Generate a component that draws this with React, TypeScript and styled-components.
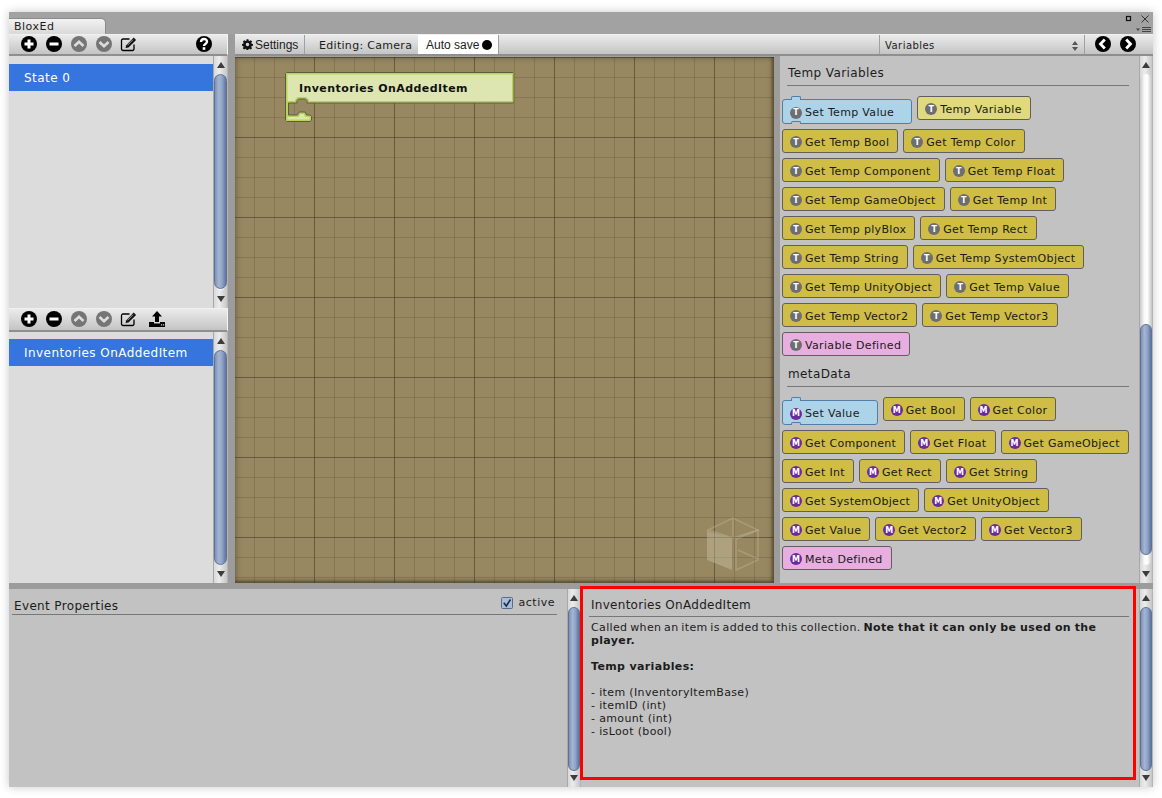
import React from "react";
import styled, { createGlobalStyle } from "styled-components";

const Global = createGlobalStyle`
  html, body { margin: 0; padding: 0; background: #fff; }
  #root { width: 1162px; height: 798px; overflow: hidden; }
`;

const Page = styled.div`
  width: 1162px; height: 798px; box-sizing: border-box; padding: 12px 9px 11px 9px;
  background: #fff; font-family: "DejaVu Sans", sans-serif; font-size: 11px; color: #1c1c1c;
`;
const Window = styled.div`
  position: relative; width: 1144px; height: 775px; display: flex; flex-direction: column;
  background: #a2a2a2; box-shadow: 0 0 9px rgba(0,0,0,.22);
`;
const TitleStrip = styled.div`
  height: 22px; flex: none; display: flex; align-items: flex-end; justify-content: space-between;
  background: #a2a2a2;
`;
const Tab = styled.div`
  width: 97px; height: 16px; box-sizing: border-box; padding-left: 5px; line-height: 16px; letter-spacing: .5px;
  background: linear-gradient(#f2f2f2, #d9d9d9); border-radius: 0 5px 0 0; border-right: 1px solid #8c8c8c; border-top: 1px solid #8c8c8c;
`;
const WinControls = styled.svg`
  width: 40px; height: 22px; flex: none; display: block;
`;
const Top = styled.div`
  height: 549px; flex: none; display: flex;
`;
const LeftCol = styled.div`
  width: 219px; flex: none; display: flex; flex-direction: column;
`;
const VSplit = styled.div<{ $w: number }>`
  width: ${p => p.$w}px; flex: none; background: #9c9c9c;
`;
const Toolbar = styled.div<{ $h: number }>`
  height: ${p => p.$h}px; box-sizing: border-box; flex: none; display: flex; align-items: center;
  padding: 0 0 1px 11px; gap: 7px;
  background: linear-gradient(#ebebeb, #c4c4c4); border-bottom: 2px solid #8f8f8f; border-top: 1px solid #f0f0f0;
  border-right: 1px solid #f4f4f4;
`;
const HelpSlot = styled.div`
  margin-left: 50px; display: flex;
`;
const UploadSlot = styled.div`
  margin-left: 3px; display: flex;
`;
const ListPanel = styled.div<{ $h: number }>`
  height: ${p => p.$h}px; flex: none; display: flex; background: #dcdcdc;
`;
const ListBody = styled.div<{ $top: number }>`
  flex: 1; padding-top: ${p => p.$top}px; min-width: 0;
`;
const ListRow = styled.div`
  height: 27px; line-height: 28px; background: #3575dd; color: #fff; padding-left: 15px; font-size: 12px; letter-spacing: .44px;
`;
const ScrollBar = styled.div<{ $w?: number }>`
  width: ${p => p.$w ?? 15}px; flex: none; box-sizing: border-box; display: flex; flex-direction: column; align-items: stretch;
  background: linear-gradient(90deg, #d8d8d8, #ececec 40%, #c6c6c6);
  border-left: 1px solid #a8a8a8; border-right: 1px solid #b4b4b4;
`;
const Arrow = styled.div<{ $down?: boolean }>`
  height: 18px; flex: none; display: flex; align-items: center; justify-content: center;
  &::before {
    content: ""; width: 0; height: 0; border-left: 4px solid transparent; border-right: 4px solid transparent;
    ${p => p.$down ? "border-top: 6px solid #3c3c3c;" : "border-bottom: 6px solid #3c3c3c;"}
  }
`;
const Track = styled.div`
  flex: 1; min-height: 0; display: flex; flex-direction: column;
  background: linear-gradient(90deg, #c9c9c9, #f8f8f8 35%, #ffffff 60%, #c4c4c4); border-radius: 8px;
`;
const Thumb = styled.div<{ $top: number; $h: number }>`
  margin-top: ${p => p.$top}px; height: ${p => p.$h}px; box-sizing: border-box; flex: none;
  background: linear-gradient(90deg, #7f92b4, #a3b5d2 35%, #8fa3c6 65%, #5f739c);
  border: 1px solid #5d7099; border-radius: 8px;
`;
const Work = styled.div`
  flex: 1; min-width: 0; display: flex; flex-direction: column;
`;
const TopBar = styled.div`
  height: 22px; box-sizing: border-box; flex: none; display: flex; align-items: stretch;
  background: linear-gradient(#ebebeb, #c4c4c4); border-bottom: 2px solid #8f8f8f; border-top: 1px solid #f0f0f0;
`;
const SettingsBtn = styled.div`
  width: 70px; box-sizing: border-box; display: flex; align-items: center; gap: 2px; padding-left: 7px;
  border-right: 1px solid #a0a0a0; font-family: "Liberation Sans", sans-serif; font-size: 12px;
`;
const EditingLabel = styled.div`
  width: 113px; box-sizing: border-box; padding-left: 14px; line-height: 21px; letter-spacing: .3px;
`;
const AutoSave = styled.div`
  width: 81px; box-sizing: border-box; display: flex; align-items: center; gap: 3px; padding-left: 8px;
  background: #fff; border-right: 1px solid #a0a0a0; font-family: "Liberation Sans", sans-serif; font-size: 12px;
  &::after { content: ""; width: 10px; height: 10px; border-radius: 50%; background: #000; }
`;
const Gap = styled.div` flex: 1; `;
const Dropdown = styled.div`
  width: 206px; box-sizing: border-box; display: flex; align-items: center; justify-content: space-between;
  padding: 2px 5px 0 5px; border-left: 1px solid #a0a0a0; border-right: 1px solid #a0a0a0; font-size: 10px; letter-spacing: .45px;
`;
const NavBtns = styled.div`
  width: 68px; flex: none; display: flex; gap: 7px; align-items: center; padding: 0 0 1px 9px; box-sizing: border-box;
`;
const WorkBody = styled.div`
  flex: 1; min-height: 0; display: flex;
`;
const Canvas = styled.div`
  position: relative; width: 539px; flex: none; overflow: hidden; margin-top: 1px;
  background-color: #978862;
  background-image:
    linear-gradient(90deg, rgba(60,50,30,.42) 1px, transparent 1px),
    linear-gradient(rgba(60,50,30,.42) 1px, transparent 1px),
    linear-gradient(90deg, rgba(80,68,40,.24) 1px, transparent 1px),
    linear-gradient(rgba(80,68,40,.24) 1px, transparent 1px);
  background-size: 80px 80px, 80px 80px, 20px 20px, 20px 20px;
  background-position: 79px 0, 0 0, 19px 0, 0 0;
  box-shadow: inset 0 0 6px rgba(40,30,10,.5), inset -2px -2px 3px rgba(40,30,10,.4);
`;
const EventBlock = styled.div`
  position: absolute; left: 50px; top: 15px; width: 229px; height: 50px;
`;
const EventShape = styled.svg`
  position: absolute; left: 0; top: 0; width: 229px; height: 50px; display: block;
`;
const EventTitle = styled.div`
  position: absolute; left: 14px; top: 10px; font-weight: 700; font-size: 11px; letter-spacing: .42px; color: #111; white-space: nowrap;
`;
const Cube = styled.svg`
  position: absolute; left: 471px; top: 459px; width: 55px; height: 57px;
`;
const Palette = styled.div`
  width: 359px; flex: none; box-sizing: border-box; background: #c2c2c2; padding: 9px 10px 0 2px; min-height: 0;
`;
const Heading = styled.div`
  margin: 0 0 10px 5px; padding: 0 0 4px 1px; height: 16px; line-height: 16px; box-sizing: content-box;
  border-bottom: 1px solid #777; font-size: 12px; letter-spacing: .4px;
`;
const Rows = styled.div`
  display: flex; flex-direction: column; gap: 5px; margin-bottom: 10px;
`;
const Row = styled.div`
  display: flex; gap: 5px; align-items: flex-start;
`;
const BLOCK = {
  get: ["#cfbd45", "#5f5f5f"],
  temp: ["#e0d97e", "#5f5f5f"],
  set: ["#add3e8", "#4f7fa6"],
  pink: ["#e8aee0", "#5f5f5f"],
} as const;
const Block = styled.div<{ $k: keyof typeof BLOCK }>`
  position: relative; height: ${p => p.$k === "set" ? 25 : 24}px; margin-top: ${p => p.$k === "set" ? 3 : 0}px;
  box-sizing: border-box; display: flex; align-items: center; gap: 3px;
  padding: 2px ${p => p.$k === "set" ? 17 : 8}px 0 7px; white-space: nowrap;
  background: ${p => BLOCK[p.$k][0]}; border: 1px solid ${p => BLOCK[p.$k][1]}; border-radius: 3px;
  letter-spacing: .33px; color: #1a1a1a;
  ${p => p.$k === "set" ? `
    &::before, &::after {
      content: ""; position: absolute; left: 8px; width: 8px; height: 3px; background: ${BLOCK.set[0]};
      border: 1px solid ${BLOCK.set[1]};
    }
    &::before { top: -4px; border-bottom: 0; border-radius: 2px 2px 0 0; }
    &::after { bottom: -1px; height: 2px; background: #c2c2c2; border-bottom: 0; border-radius: 2px 2px 0 0; }
  ` : ""}
`;
const Badge = styled.span<{ $m?: boolean }>`
  width: 12px; height: 12px; flex: none; border-radius: 50%; display: flex; align-items: center; justify-content: center;
  background: ${p => p.$m ? "#6b2a9e" : "#6e6e72"}; color: #fff; font-size: 8px; font-weight: 700; letter-spacing: 0;
`;
const HSplit = styled.div`
  height: 6px; flex: none; background: #9c9c9c;
`;
const Bottom = styled.div`
  flex: 1; min-height: 0; display: flex;
`;
const Pane = styled.div`
  width: 572px; flex: none; display: flex; background: #c2c2c2;
`;
const PaneBody = styled.div<{ $pl: number; $pr: number }>`
  flex: 1; min-width: 0; box-sizing: border-box; padding: 0 ${p => p.$pr}px 0 ${p => p.$pl}px;
`;
const PropHead = styled.div`
  display: flex; align-items: flex-end; justify-content: space-between; height: 26px; box-sizing: border-box;
  padding: 0 2px 0 2px; border-bottom: 1px solid #777;
`;
const PropTitle = styled.div`
  font-size: 12px; letter-spacing: .35px; line-height: 16px;
`;
const Active = styled.div`
  display: flex; align-items: center; gap: 6px; letter-spacing: .5px; padding-bottom: 5px;
`;
const Check = styled.svg`
  width: 12px; height: 12px; display: block;
`;
const DocTitle = styled.div`
  height: 28px; box-sizing: border-box; margin-left: -2px; padding: 8px 0 0 2px; line-height: 16px; font-size: 12px; letter-spacing: .28px;
  border-bottom: 1px solid #777;
`;
const Doc = styled.div`
  padding-top: 4px; line-height: 13px; letter-spacing: .36px;
`;
const DocLine = styled.div<{ $gap?: number }>`
  margin-top: ${p => p.$gap ?? 0}px; white-space: nowrap;
`;
const Lead = styled.span`
  word-spacing: -1.1px;
`;
const LeadStrong = styled.b`
  word-spacing: -.5px;
`;
const RedFrame = styled.div`
  position: absolute; left: 571px; top: 574px; width: 556px; height: 194px; box-sizing: border-box;
  border: 3px solid #f00; pointer-events: none;
`;
const Ico = styled.svg`
  width: 18px; height: 18px; display: block; flex: none;
`;
const SmallIco = styled.svg`
  width: 11px; height: 11px; display: block; flex: none;
`;
const UpDown = styled.svg`
  width: 8px; height: 12px; display: block; flex: none;
`;

type Kind = "plus" | "minus" | "up" | "down" | "help" | "left" | "right";
function Round({ kind }: { kind: Kind }) {
  const grey = kind === "up" || kind === "down";
  return (
    <Ico viewBox="0 0 18 18">
      <circle cx="9" cy="9" r="8" fill={grey ? "#757575" : "#000"} />
      {kind === "plus" && <path d="M9 4.5v9M4.5 9h9" stroke="#fff" strokeWidth="3" />}
      {kind === "minus" && <path d="M4.5 9h9" stroke="#fff" strokeWidth="3" />}
      {kind === "up" && <path d="M4.5 11 9 6.7l4.5 4.3" fill="none" stroke="#ddd" strokeWidth="2.6" />}
      {kind === "down" && <path d="M4.5 7 9 11.3 13.5 7" fill="none" stroke="#ddd" strokeWidth="2.6" />}
      {kind === "left" && <path d="M10.8 4.5 6.5 9l4.3 4.5" fill="none" stroke="#fff" strokeWidth="2.8" />}
      {kind === "right" && <path d="M7.2 4.5 11.500 9l-4.300 4.500" fill="none" stroke="#fff" strokeWidth="2.8" />}
      {kind === "help" && (
        <>
          <path d="M6 7c0-4 6-4 6-.4 0 2.400-3 2.200-3 4.400" fill="none" stroke="#fff" strokeWidth="2.400" />
          <rect x="7.700" y="12.200" width="2.600" height="2.600" fill="#fff" />
        </>
      )}
    </Ico>
  );
}
function EditIcon() {
  return (
    <Ico viewBox="0 0 18 18">
      <path d="M14 9.500V14a1.500 1.500 0 0 1-1.500 1.500H3A1.500 1.500 0 0 1 1.500 14V5.500A1.500 1.500 0 0 1 3 4h6.500" fill="none" stroke="#000" strokeWidth="1.300" />
      <path d="M6.300 10.200 13.700 2.500l2.400 2.400-7.600 7.500-3 .6z" fill="#111" />
      <path d="M7.500 10.300 13 4.700" stroke="#ddd" strokeWidth=".7" />
    </Ico>
  );
}
function UploadIcon() {
  return (
    <Ico viewBox="0 0 18 18">
      <path d="M9 1 14 6.500H11V12H7V6.500H4z" fill="#000" />
      <path d="M1 12h5v1.500h6V12h5v5H1z" fill="#000" />
      <rect x="13" y="14.300" width="1.200" height="1.200" fill="#ddd" />
      <rect x="15" y="14.300" width="1.200" height="1.200" fill="#ddd" />
    </Ico>
  );
}
function Gear() {
  return (
    <SmallIco viewBox="0 0 24 24">
      <path fill="#111" fillRule="evenodd" d="M10 1h4l.6 3.200 2 .8 2.700-1.800 2.800 2.800L20.200 8.700l.8 2 3 .6v4l-3 .6-.8 2 1.700 2.700-2.800 2.800-2.700-1.800-2 .8-.6 2.600h-4l-.6-2.600-2-.8-2.700 1.800-2.800-2.800 1.700-2.700-.8-2-3-.6v-4l3-.6.8-2L2.100 6l2.800-2.800L7.600 5l2-.8zM12 8.500a3.800 3.800 0 1 0 0 7.600 3.800 3.800 0 0 0 0-7.600z" transform="translate(0 -.5)" />
    </SmallIco>
  );
}

const tempRows: [string, keyof typeof BLOCK][][] = [
  [["Set Temp Value", "set"], ["Temp Variable", "temp"]],
  [["Get Temp Bool", "get"], ["Get Temp Color", "get"]],
  [["Get Temp Component", "get"], ["Get Temp Float", "get"]],
  [["Get Temp GameObject", "get"], ["Get Temp Int", "get"]],
  [["Get Temp plyBlox", "get"], ["Get Temp Rect", "get"]],
  [["Get Temp String", "get"], ["Get Temp SystemObject", "get"]],
  [["Get Temp UnityObject", "get"], ["Get Temp Value", "get"]],
  [["Get Temp Vector2", "get"], ["Get Temp Vector3", "get"]],
  [["Variable Defined", "pink"]],
];
const metaRows: [string, keyof typeof BLOCK][][] = [
  [["Set Value", "set"], ["Get Bool", "get"], ["Get Color", "get"]],
  [["Get Component", "get"], ["Get Float", "get"], ["Get GameObject", "get"]],
  [["Get Int", "get"], ["Get Rect", "get"], ["Get String", "get"]],
  [["Get SystemObject", "get"], ["Get UnityObject", "get"]],
  [["Get Value", "get"], ["Get Vector2", "get"], ["Get Vector3", "get"]],
  [["Meta Defined", "pink"]],
];

function BlockRows({ rows, meta }: { rows: [string, keyof typeof BLOCK][][]; meta?: boolean }) {
  return (
    <Rows>
      {rows.map((r, i) => (
        <Row key={i}>
          {r.map(([label, k]) => (
            <Block key={label} $k={k}>
              <Badge $m={meta}>{meta ? "M" : "T"}</Badge>
              {label}
            </Block>
          ))}
        </Row>
      ))}
    </Rows>
  );
}

function Scroll({ top, h, w }: { top: number; h: number; w?: number }) {
  return (
    <ScrollBar $w={w}>
      <Arrow />
      <Track><Thumb $top={top} $h={h} /></Track>
      <Arrow $down />
    </ScrollBar>
  );
}

const EVENT_PATH = "M.5 1.500 1.500.5H228l1 1V30l-1 1H22V28.500L20.500 27H13.500L12 28.500V31H3.500V43H12.500L14 40H20L21.500 43H25L26.500 44.500V48L25.500 49.500H1.500L.5 48.500Z";

export default function App() {
  return (
    <Page>
      <Global />
      <Window>
        <TitleStrip>
          <Tab>BloxEd</Tab>
          <WinControls viewBox="0 0 40 22">
            <rect x="13.500" y="4.500" width="4" height="4" fill="none" stroke="#111" strokeWidth="1.200" />
            <path d="M28.500 3.500l7 7M35.500 3.500l-7 7" stroke="#333" strokeWidth="1" />
            <path d="M23 16.500h4l-2 2.500z" fill="#444" />
            <path d="M29 15.500h9M29 17.500h9M29 19.500h9" stroke="#444" strokeWidth="1" />
          </WinControls>
        </TitleStrip>
        <Top>
          <LeftCol>
            <Toolbar $h={22}>
              <Round kind="plus" /><Round kind="minus" /><Round kind="up" /><Round kind="down" /><EditIcon />
              <HelpSlot><Round kind="help" /></HelpSlot>
            </Toolbar>
            <ListPanel $h={252}>
              <ListBody $top={8}>
                <ListRow>State 0</ListRow>
              </ListBody>
              <Scroll top={0} h={215} />
            </ListPanel>
            <Toolbar $h={24}>
              <Round kind="plus" /><Round kind="minus" /><Round kind="up" /><Round kind="down" /><EditIcon />
              <UploadSlot><UploadIcon /></UploadSlot>
            </Toolbar>
            <ListPanel $h={251}>
              <ListBody $top={7}>
                <ListRow>Inventories OnAddedItem</ListRow>
              </ListBody>
              <Scroll top={0} h={215} />
            </ListPanel>
          </LeftCol>
          <VSplit $w={7} />
          <Work>
            <TopBar>
              <SettingsBtn><Gear />Settings</SettingsBtn>
              <EditingLabel>Editing: Camera</EditingLabel>
              <AutoSave>Auto save</AutoSave>
              <Gap />
              <Dropdown>
                Variables
                <UpDown viewBox="0 0 8 12"><path d="M4 1 7 5H1zM4 11 1 7h6z" fill="#555" /></UpDown>
              </Dropdown>
              <NavBtns><Round kind="left" /><Round kind="right" /></NavBtns>
            </TopBar>
            <WorkBody>
              <Canvas>
                <EventBlock>
                  <EventShape viewBox="0 0 229 50">
                    <defs>
                      <clipPath id="eventClip"><path d={EVENT_PATH} /></clipPath>
                    </defs>
                    <path d={EVENT_PATH} fill="#dde6b0" />
                    <path d={EVENT_PATH} fill="none" stroke="#bcd05a" strokeWidth="4" clipPath="url(#eventClip)" />
                    <path d={EVENT_PATH} fill="none" stroke="#56603c" />
                  </EventShape>
                  <EventTitle>Inventories OnAddedItem</EventTitle>
                </EventBlock>
                <Cube viewBox="0 0 55 57" fill="none" stroke="rgba(205,195,165,.32)" strokeWidth="1.500">
                  <path d="M1 15 26 22v32L1 44z" fill="rgba(205,195,165,.42)" stroke="none" />
                  <path d="M2 14 27 2l25 12-25 8zM27 2v20" />
                  <path d="M30 23l22-9v30L30 54zM32 34l20 9" />
                </Cube>
              </Canvas>
              <VSplit $w={6} />
              <Palette>
                <Heading>Temp Variables</Heading>
                <BlockRows rows={tempRows} />
                <Heading>metaData</Heading>
                <BlockRows rows={metaRows} meta />
              </Palette>
              <Scroll top={250} h={231} w={14} />
            </WorkBody>
          </Work>
        </Top>
        <HSplit />
        <Bottom>
          <Pane>
            <PaneBody $pl={3} $pr={10}>
              <PropHead>
                <PropTitle>Event Properties</PropTitle>
                <Active>
                  <Check viewBox="0 0 12 12">
                    <rect x=".5" y=".5" width="11" height="11" rx="1" fill="#a9bdd9" stroke="#5a6c8c" />
                    <path d="M2.800 5.800 5.300 9 9.500 2.500" fill="none" stroke="#1c2c50" strokeWidth="1.600" />
                  </Check>
                  active
                </Active>
              </PropHead>
            </PaneBody>
            <Scroll top={0} h={164} w={14} />
          </Pane>
          <Pane>
            <PaneBody $pl={10} $pr={10}>
              <DocTitle>Inventories OnAddedItem</DocTitle>
              <Doc>
                <DocLine><Lead>Called when an item is added to this collection. </Lead><LeadStrong>Note that it can only be used on the</LeadStrong></DocLine>
                <DocLine><b>player.</b></DocLine>
                <DocLine $gap={13}><b>Temp variables:</b></DocLine>
                <DocLine $gap={13}>- item (InventoryItemBase)</DocLine>
                <DocLine>- itemID (int)</DocLine>
                <DocLine>- amount (int)</DocLine>
                <DocLine>- isLoot (bool)</DocLine>
              </Doc>
            </PaneBody>
            <Scroll top={0} h={164} w={14} />
          </Pane>
        </Bottom>
        <RedFrame />
      </Window>
    </Page>
  );
}
